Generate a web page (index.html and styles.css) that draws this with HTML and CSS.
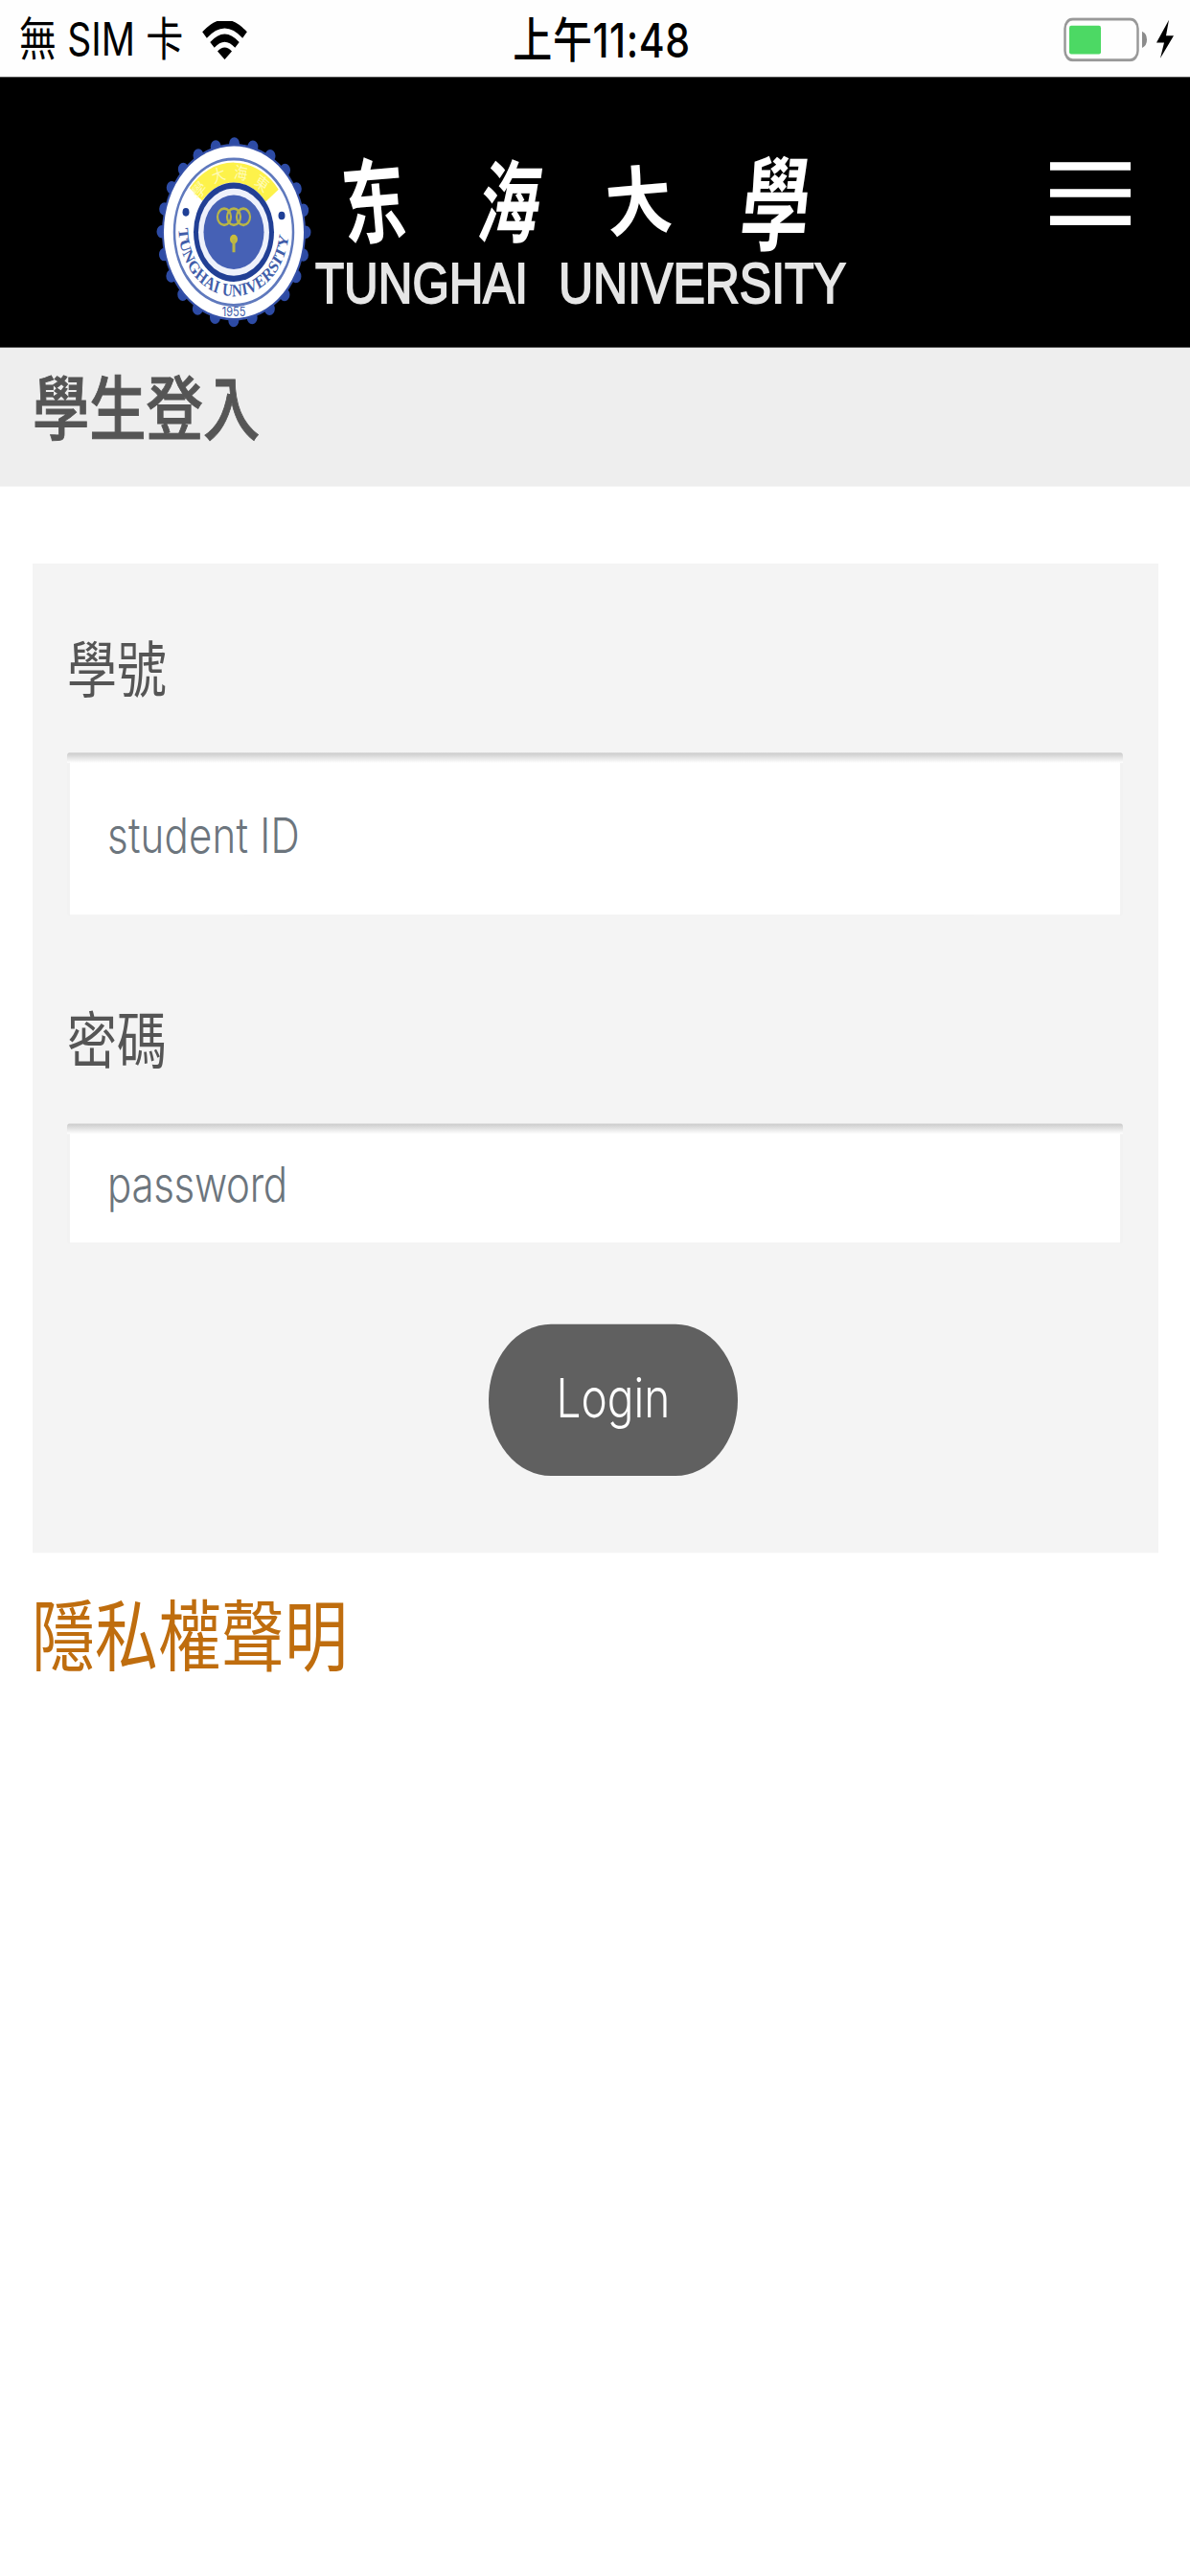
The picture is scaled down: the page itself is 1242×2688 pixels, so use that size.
FILE: index.html
```html
<!DOCTYPE html>
<html lang="zh-Hant">
<head>
  <meta charset="UTF-8">
  <title>學生登入</title>
  <link rel="stylesheet" href="styles.css">
</head>
<body>
  <div class="page">
    <div class="status-bar">
      <div class="carrier">
        <span class="carrier-name">無 SIM 卡</span>
        <svg class="wifi" viewBox="0 0 47 33">
          <path d="M2.500 12 Q23.500 -7 44.500 12" fill="none" stroke="#000" stroke-width="7"/>
          <path d="M10.500 20.500 Q23.500 8.500 36.500 20.500" fill="none" stroke="#000" stroke-width="6.500"/>
          <path d="M16 26 Q23.500 19.500 31 26 L23.500 33 Z"/>
        </svg>
      </div>
      <span class="time">上午11:48</span>
      <svg class="battery" viewBox="0 0 117 38">
        <rect x="1.500" y="1.500" width="76" height="35" rx="8" fill="none" stroke="#999" stroke-width="2.500"/>
        <rect x="6" y="7" width="33" height="24.500" rx="2" fill="#4cd964"/>
        <path d="M82 12 Q87 14 87 19 Q87 24 82 26 Z" fill="#8c8c8c"/>
        <path d="M110 2 L97 21.500 H105 L101 35 L115 15.500 H107 Z"/>
      </svg>
    </div>

    <header class="header">
      <svg class="logo" viewBox="150 130 740 220" preserveAspectRatio="none">
        <g transform="translate(244 242) scale(1 1.23)">
          <circle r="75" fill="none" stroke="#2d4ba5" stroke-width="11" stroke-linecap="round" stroke-dasharray="0 19.635"/>
          <circle r="75" fill="#3450a8"/>
          <circle r="73" fill="#fff"/>
          <circle r="62" fill="none" stroke="#5f79bd" stroke-width="2.500"/>
          <path d="M-39.500 -32 A51 51 0 0 1 40 -31" fill="none" stroke="#fdf24a" stroke-width="17"/>
          <path id="top" d="M-37 -27 A46 46 0 0 1 37 -27" fill="none"/>
          <text class="seal-top"><textPath href="#top" textLength="78">學大海東</textPath></text>
          <circle cx="-50" cy="-17" r="3.500" fill="#1f3f96"/>
          <circle cx="50" cy="-14" r="3.500" fill="#1f3f96"/>
          <path id="bottom" d="M-57.500 -3 A57.500 57.500 0 0 0 57.500 -3" fill="none"/>
          <text class="seal-text"><textPath href="#bottom" textLength="174">TUNGHAI UNIVERSITY</textPath></text>
          <text class="seal-year" x="0" y="71">1955</text>
          <circle r="42" fill="#213f95"/>
          <circle r="37" fill="#eef1fb"/>
          <circle r="31.500" fill="#4661b5"/>
          <g fill="none" stroke="#b8b548" stroke-width="2.200">
            <circle cx="-10" cy="-13" r="7"/>
            <circle cx="0" cy="-13" r="7"/>
            <circle cx="10" cy="-13" r="7"/>
          </g>
          <circle cy="6" r="4" fill="#c9bd3b"/>
          <path d="M0 6 V17" stroke="#b8b548" stroke-width="3"/>
        </g>
        <g class="logo-cn">
          <text transform="translate(393 246) rotate(-5) scale(1 1.46)">东</text>
          <text transform="translate(528 246) skewX(-8) scale(.96 1.42)">海</text>
          <text transform="translate(669 238) rotate(-5) scale(1.040 1.180)">大</text>
          <text transform="translate(806 253) skewX(-6) scale(1.080 1.62)">學</text>
        </g>
        <g class="logo-en" transform="translate(0 316) scale(1 1.22)">
          <text x="329" textLength="222" lengthAdjust="spacingAndGlyphs">TUNGHAI</text>
          <text x="583" textLength="300" lengthAdjust="spacingAndGlyphs">UNIVERSITY</text>
        </g>
      </svg>
      <div class="menu">
        <span></span>
        <span></span>
        <span></span>
      </div>
    </header>

    <div class="title-bar">
      <h1>學生登入</h1>
    </div>

    <form class="login-form">
      <label for="studentId">學號</label>
      <input class="student-id" id="studentId" type="text" placeholder="student ID">
      <label for="password">密碼</label>
      <input class="password" id="password" type="password" placeholder="password">
      <button type="submit">Login</button>
    </form>

    <a class="privacy" href="#">隱私權聲明</a>
  </div>
</body>
</html>
```
FILE: styles.css
```css
body {
  margin: 0;
  height: 2688px;
  overflow: hidden;
  background-color: #fff;
  font-family: Inter, "Noto Sans CJK TC", sans-serif;
  color: #555;
}
/* the 1242x2208 layout is stretched to the taller screen */
.page {
  height: 2208px;
  transform: scaleY(1.2174);
  transform-origin: 0 0;
}
.status-bar {
  display: grid;
  grid-template-columns: 1fr auto 1fr;
  align-items: center;
  height: 66px;
  box-sizing: border-box;
  padding: 0 15px 0 20px;
  background-color: #fefefe;
  color: #000;
  font-size: 39px;
  line-height: 68px;
}
.carrier {
  display: flex;
  align-items: center;
  gap: 20px;
}
.carrier-name {
  letter-spacing: 0.1px;
}
.wifi {
  width: 47px;
  height: 33px;
}
.time {
  padding-left: 9px;
  font-size: 41px;
  font-weight: 500;
  letter-spacing: 0.6px;
}
.battery {
  justify-self: end;
  width: 117px;
  height: 38px;
}
.header {
  display: flex;
  justify-content: space-between;
  align-items: flex-start;
  height: 232px;
  box-sizing: border-box;
  padding: 41px 62px 0 150px;
  background-color: #000;
}
.logo {
  width: 740px;
  height: 180.7px;
}
.seal-top {
  font-size: 14px;
  fill: #fffbb5;
}
.seal-text {
  font-family: "Liberation Serif", serif;
  font-size: 15px;
  font-weight: bold;
  fill: #415da9;
}
.seal-year {
  font-size: 11px;
  text-anchor: middle;
  fill: #415da9;
}
.logo-cn {
  font-family: "Noto Sans CJK SC", sans-serif;
  font-size: 66px;
  font-weight: bold;
  text-anchor: middle;
  fill: #fff;
}
.logo-en {
  font-family: "Liberation Sans", Arial, sans-serif;
  font-size: 49px;
  fill: #e6e6e6;
  stroke: #e6e6e6;
  stroke-width: 1.6px;
}
.menu {
  display: flex;
  flex-direction: column;
  gap: 15.6px;
  width: 84px;
  padding-top: 31.5px;
}
.menu span {
  height: 7.7px;
  background-color: #fff;
}
.title-bar {
  height: 118.5px;
  box-sizing: border-box;
  padding: 17.5px 34px;
  background-color: #eee;
}
h1 {
  margin: 0;
  font-size: 59.3px;
  line-height: 70px;
  font-weight: 500;
  -webkit-text-stroke: 0.8px #555;
}
.login-form {
  display: flex;
  flex-direction: column;
  width: 1175px;
  box-sizing: border-box;
  margin: 66.5px 0 0 33.5px;
  padding: 62px 36.5px 66px;
  background-color: #f4f4f4;
}
label {
  font-size: 52px;
  line-height: 60px;
}
input {
  margin: 40px 0 77.5px;
  padding: 0 42px;
  border: none;
  border-radius: 3px;
  background: linear-gradient(#c9c9c9, #fff) top / 100% 9px no-repeat,
    linear-gradient(#fff, #fff) top / calc(100% - 6px) calc(100% - 1px) no-repeat #f2f2f2;
  font-family: Inter, sans-serif;
  font-size: 42px;
  font-weight: 300;
}
input::placeholder {
  color: #6c757d;
}
.student-id {
  height: 140px;
}
.student-id::placeholder {
  letter-spacing: 0.2px;
}
.password {
  height: 103px;
  margin-bottom: 69px;
}
.password::placeholder {
  letter-spacing: -0.3px;
}
button {
  align-self: center;
  width: 260px;
  height: 130px;
  margin-left: 38px;
  padding: 0 0 3px;
  border: none;
  border-radius: 65px;
  background-color: #606060;
  color: #fff;
  font-family: Inter, sans-serif;
  font-size: 46px;
  font-weight: 300;
}
.privacy {
  display: block;
  margin: 36.5px 0 0 33px;
  font-size: 66px;
  line-height: 72px;
  color: #bf6d0e;
  text-decoration: none;
}
```
